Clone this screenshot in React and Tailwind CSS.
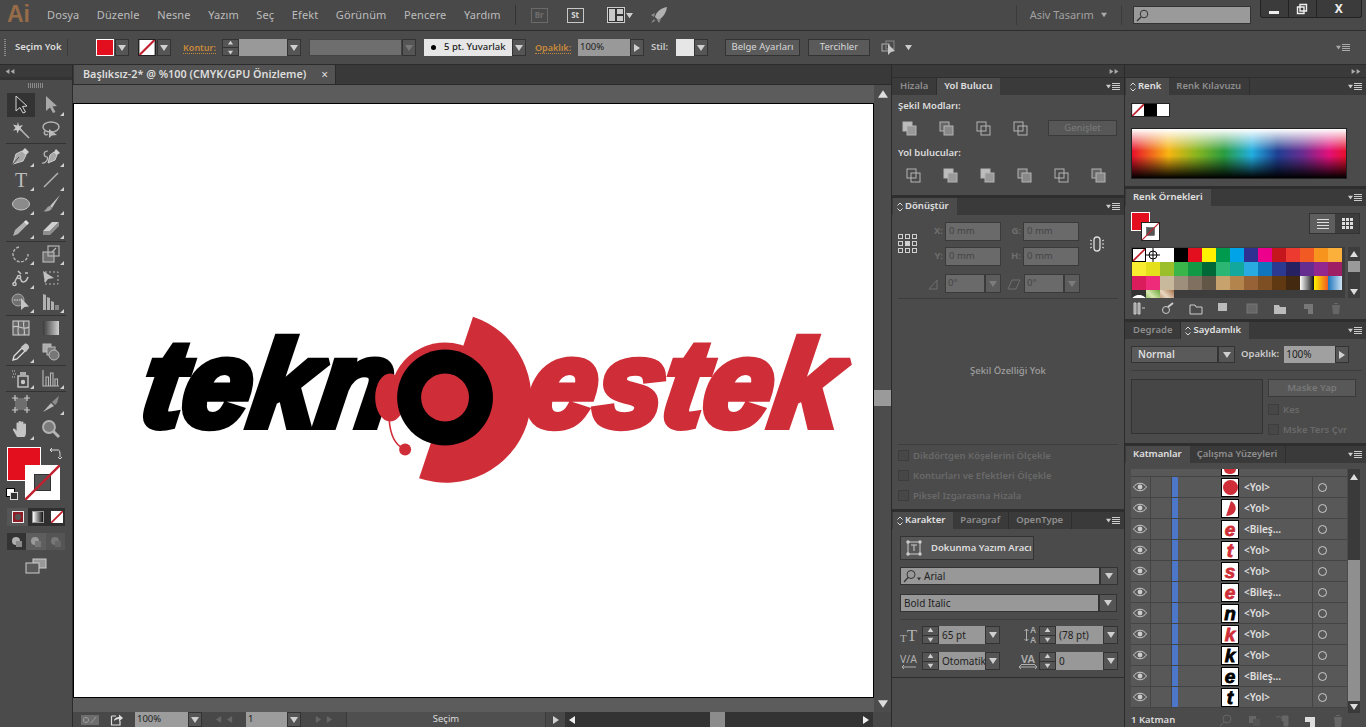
import React from 'react';

const FONT = "font-['Noto_Sans','Liberation_Sans',sans-serif]";

const Arrow = ({ dir = 'down', className = 'fill-[#d0d0d0]', size = 8 }) => {
    const pts = { down: '0,1 8,1 4,7', up: '0,7 8,7 4,1', right: '1,0 7,4 1,8', left: '7,0 1,4 7,8' };
    return (
        <svg width={size} height={size} viewBox="0 0 8 8" className={className}>
            <polygon points={pts[dir]} />
        </svg>
    );
};

const Drop = ({ w = 'w-[14px]', h = 'h-full', muted }) => (
    <div className={`${w} ${h} shrink-0 flex items-center justify-center bg-[#555] border border-[#333]`}>
        <Arrow className={muted ? 'fill-[#777]' : 'fill-[#cfcfcf]'} />
    </div>
);

const Spin = ({ w = 'w-[17px]' }) => (
    <div className={`${w} h-full shrink-0 flex flex-col items-center justify-center gap-[2px] bg-[#555] border border-[#333]`}>
        <Arrow dir="up" size={7} />
        <div className="w-full h-px bg-[#333]" />
        <Arrow size={7} />
    </div>
);

const PanelMenu = () => (
    <div className="flex items-center gap-[1px] ml-auto mr-[4px]">
        <Arrow size={5} className="fill-[#ccc]" />
        <div className="w-[8px] flex flex-col gap-[1px]">
            <div className="h-px bg-[#ccc]" />
            <div className="h-px bg-[#ccc]" />
            <div className="h-px bg-[#ccc]" />
            <div className="h-px bg-[#ccc]" />
        </div>
    </div>
);

const Updown = () => (
    <svg width="6" height="10" viewBox="0 0 6 10" className="mr-[2px] stroke-[#ddd] fill-none">
        <path d="M0.5 3.5 L3 1 L5.5 3.5 M0.5 6.5 L3 9 L5.5 6.5" />
    </svg>
);

const PanelTabs = ({ tabs, active = 0, updown }) => (
    <div className="h-[18px] shrink-0 flex items-stretch bg-[#3a3a3a] pl-[1px] border-t border-[#2e2e2e]">
        {tabs.map((t, i) => (
            <div
                key={t}
                className={`flex items-center pr-[8px] text-[9.5px] font-semibold whitespace-nowrap ${
                    i === active && updown ? 'pl-[4px]' : 'pl-[7px]'
                } ${i === active ? 'bg-[#4b4b4b] text-[#e0e0e0]' : 'text-[#8e8e8e] border-r border-[#2e2e2e]'}`}
            >
                {i === active && updown && <Updown />}
                {t}
            </div>
        ))}
        <PanelMenu />
    </div>
);

const CollapseStrip = ({ left }) => (
    <div className={`h-[12px] shrink-0 bg-[#3a3a3a] flex items-center px-[5px] ${left ? 'justify-start' : 'justify-end'}`}>
        <div className="flex">
            <Arrow dir={left ? 'left' : 'right'} size={5} className="fill-[#aaa]" />
            <Arrow dir={left ? 'left' : 'right'} size={5} className="fill-[#aaa]" />
        </div>
    </div>
);

const Shape = ({ children, w = 20, h = 20, box = '0 0 20 20', className = '' }) => (
    <svg width={w} height={h} viewBox={box} className={className}>
        {children}
    </svg>
);

const G = '#b4b4b4';

const toolIcons = {
    select: <path d="M5 1 V16 L9 12.5 L12 18 L14.5 17 L11.5 11.5 L16 11 Z" fill="#2d2d2d" stroke="#d5d5d5" />,
    direct: <path d="M5 1 V16 L9 12.5 L12 18 L14.5 17 L11.5 11.5 L16 11 Z" fill="#a8a8a8" />,
    wand: (
        <g>
            <path d="M7 2 L8 6 L12 5 L9.5 8 L12 11 L8 10 L6.5 13.5 L5.5 10 L2 10.5 L4.5 8 L2 4.5 L6 5.5 Z" fill="#c8c8c8" />
            <path d="M9 9 L18 18" stroke={G} strokeWidth="1.6" />
        </g>
    ),
    lasso: (
        <g fill="none" stroke={G} strokeWidth="1.4">
            <ellipse cx="10" cy="7" rx="8" ry="5" />
            <path d="M8 9 V18 L11 15.5 L16 15 Z" fill="#bbb" stroke="none" />
            <path d="M4 11 C2 14 5 16 7 14" />
        </g>
    ),
    pen: (
        <g>
            <path d="M2 18 L5 8 L11 5 L15 9 L12 15 Z" fill="#a8a8a8" stroke="#cfcfcf" />
            <path d="M11 5 L14 2 L18 6 L15 9 Z" fill="#cfcfcf" />
            <path d="M2 18 L8 11" stroke="#444" />
        </g>
    ),
    curve: (
        <g>
            <path d="M7 17 L9 9 L13 6 L16 9 L14 14 Z" fill="#a8a8a8" stroke="#cfcfcf" />
            <path d="M13 6 L15 3 L19 7 L16 9 Z" fill="#cfcfcf" />
            <path d="M7 5 C1 5 3 11 6 11 C8 13 4 18 1 17" stroke="#bbb" fill="none" strokeWidth="1.2" />
        </g>
    ),
    line: <path d="M3 17 L17 3" stroke={G} strokeWidth="1.4" />,
    ellipse: <ellipse cx="10" cy="10" rx="8.5" ry="6" fill="#8b8b8b" stroke="#c4c4c4" />,
    brush: (
        <g>
            <path d="M9 12 L19 1 L11 14 Z" fill="#c4c4c4" />
            <path d="M2 17 C5 17 6 12 9 12 L11 14 C10 17 6 18 2 17 Z" fill="#a0a0a0" />
        </g>
    ),
    pencil: (
        <g>
            <path d="M2 18 L4 12 L14 3 L17 6 L7 16 Z" fill="#b0b0b0" />
            <path d="M13 4 L15 2 L18 5 L16 7 Z" fill="#e0e0e0" />
        </g>
    ),
    eraser: (
        <g>
            <path d="M2 13 L11 4 L18 4 L9 13 Z" fill="#d0d0d0" />
            <path d="M2 13 L9 13 L9 17 L2 17 Z M9 13 L18 4 V8 L9 17 Z" fill="#8e8e8e" />
        </g>
    ),
    rotate: <path d="M8 3 A7.5 7.5 0 1 0 17 10" fill="none" stroke={G} strokeWidth="1.4" strokeDasharray="3 1.5" />,
    scale: (
        <g fill="none" stroke={G} strokeWidth="1.2">
            <rect x="2" y="8" width="11" height="10" fill="#707070" />
            <rect x="7" y="2" width="11" height="10" />
            <path d="M11 8 L15 4" />
        </g>
    ),
    warp: (
        <g fill="none" stroke="#c4c4c4" strokeWidth="1.5">
            <path d="M3 16 C6 8 8 6 10 12 C11 15 15 15 17 9" />
            <circle cx="3.5" cy="16" r="1.6" fill="#444" />
            <circle cx="8" cy="9" r="1.6" fill="#444" />
            <path d="M7 3 L10 6 M14 5 L17 5" />
        </g>
    ),
    free: (
        <g>
            <rect x="4" y="4" width="13" height="12" fill="none" stroke={G} strokeDasharray="2 2" />
            <path d="M2 3 L13 10 L7 11 L4 15 Z" fill="#c0c0c0" />
        </g>
    ),
    builder: (
        <g>
            <circle cx="7" cy="8" r="6" fill="#707070" stroke="#aaa" />
            <path d="M3 8 H11" stroke="#ddd" strokeDasharray="1.5 1" />
            <path d="M10 6 V18 L13.5 15 L18 14.5 Z" fill="#c4c4c4" />
        </g>
    ),
    perspective: (
        <g fill="#b0b0b0">
            <path d="M2 2 L5 3 V18 H2 Z M6 5 L9 6 V18 H6 Z M10 9 L13 10 V18 H10 Z" />
            <path d="M14 13 H18 V18 H14 Z" fill="#888" />
        </g>
    ),
    mesh: (
        <g fill="none" stroke="#c8c8c8" strokeWidth="1.1">
            <rect x="2" y="3" width="16" height="14" fill="#666" />
            <path d="M2 9 C7 6 12 13 18 9 M7 3 C9 8 5 13 8 17 M13 3 C11 8 15 13 13 17" />
        </g>
    ),
    gradient: (
        <g>
            <defs>
                <linearGradient id="tg" x1="0" x2="1">
                    <stop offset="0" stopColor="#3c3c3c" />
                    <stop offset="1" stopColor="#d0d0d0" />
                </linearGradient>
            </defs>
            <rect x="2" y="3" width="16" height="14" fill="url(#tg)" />
        </g>
    ),
    dropper: (
        <g>
            <path d="M2 18 L3 14 L11 6 L14 9 L6 17 Z" fill="none" stroke="#ddd" strokeWidth="1.3" />
            <path d="M10 5 L14 1.5 C16 1 18.5 3.5 18 6 L15 10 Z" fill="#c4c4c4" />
        </g>
    ),
    blend: (
        <g stroke="#bbb" fill="#777">
            <rect x="2" y="2" width="8" height="8" fill="#aaa" />
            <rect x="6" y="5" width="8" height="8" />
            <circle cx="13" cy="13" r="5" />
        </g>
    ),
    sprayer: (
        <g>
            <rect x="7" y="8" width="10" height="11" fill="none" stroke="#c8c8c8" strokeWidth="1.4" />
            <rect x="9" y="4" width="6" height="4" fill="#aaa" />
            <circle cx="12" cy="14" r="2.2" fill="#c8c8c8" />
            <path d="M1 3 H5 M2 6 H6 M1 9 H4" stroke="#ccc" strokeDasharray="1 1" />
        </g>
    ),
    column: (
        <g fill="none" stroke="#b8b8b8" strokeWidth="1.1">
            <path d="M2 2 V18 H18" />
            <path d="M5 18 V9 H7.5 V18 M9.5 18 V5 H12 V18 M14 18 V11 H16.5 V18" />
        </g>
    ),
    artboard: (
        <g stroke="#c8c8c8" strokeWidth="1.2">
            <rect x="4" y="4" width="12" height="12" fill="#6e6e6e" stroke="none" />
            <path d="M4 1 V7 M16 1 V7 M4 13 V19 M16 13 V19 M1 4 H7 M13 4 H19 M1 16 H7 M13 16 H19" fill="none" />
        </g>
    ),
    slice: (
        <g>
            <path d="M2 18 L10 9 L13 12 Z" fill="#bbb" />
            <path d="M11 8 L18 2 L16 9 L14 11 Z" fill="#8c8c8c" />
        </g>
    ),
    hand: (
        <path
            d="M6 18 L2 11 C1.5 9.5 3.5 9 4.5 10.5 L5.5 12 V4.5 C5.5 3 7.5 3 7.5 4.5 V9 V3 C7.5 1.5 10 1.5 10 3 V9 V3.5 C10 2 12.5 2 12.5 3.5 V9.5 V5.5 C12.5 4 15 4 15 5.5 V13 C15 16 14 18 13 18 Z"
            fill="#c4c4c4"
        />
    ),
    zoom: (
        <g fill="none" stroke="#b4b4b4">
            <circle cx="8" cy="8" r="6" strokeWidth="1.8" fill="#7c7c7c" />
            <path d="M12.5 12.5 L18 18" strokeWidth="3" />
        </g>
    ),
};

const Tool = ({ name, mark, active, children }) => (
    <div className={`relative w-[28px] h-[24px] flex items-center justify-center ${active ? 'bg-[#333]' : ''}`}>
        {children || <Shape>{toolIcons[name]}</Shape>}
        {mark && <div className="absolute right-[1px] bottom-[1px] w-0 h-0 border-l-[4px] border-l-transparent border-b-[4px] border-b-[#cfcfcf]" />}
    </div>
);

const ToolRow = ({ children, tall }) => (
    <div className={`flex justify-center gap-[2px] shrink-0 ${tall ? 'h-[25px]' : 'h-[24px]'}`}>{children}</div>
);
const ToolSep = () => <div className="h-px shrink-0 bg-[#333] mx-[6px] my-[0.5px]" />;

const Toolbar = () => (
    <div className="w-[73px] shrink-0 flex flex-col bg-[#4b4b4b] border-r border-[#2b2b2b]">
        <CollapseStrip left />
        <div className="h-[3px] bg-[#333]" />
        <div className="mx-auto mt-[3px] mb-[5px] w-[16px] h-[5px] bg-[repeating-linear-gradient(to_right,#8a8a8a_0,#8a8a8a_1px,transparent_1px,transparent_2px)]" />
        <ToolRow tall>
            <Tool name="select" active />
            <Tool name="direct" mark />
        </ToolRow>
        <ToolRow>
            <Tool name="wand" />
            <Tool name="lasso" />
        </ToolRow>
        <ToolSep />
        <ToolRow>
            <Tool name="pen" mark />
            <Tool name="curve" mark />
        </ToolRow>
        <ToolRow>
            <Tool mark>
                <span className="font-['Liberation_Serif',serif] text-[20px] leading-none text-[#bdbdbd]">T</span>
            </Tool>
            <Tool name="line" mark />
        </ToolRow>
        <ToolRow>
            <Tool name="ellipse" mark />
            <Tool name="brush" mark />
        </ToolRow>
        <ToolRow>
            <Tool name="pencil" mark />
            <Tool name="eraser" mark />
        </ToolRow>
        <ToolSep />
        <ToolRow>
            <Tool name="rotate" mark />
            <Tool name="scale" mark />
        </ToolRow>
        <ToolRow>
            <Tool name="warp" mark />
            <Tool name="free" />
        </ToolRow>
        <ToolRow>
            <Tool name="builder" mark />
            <Tool name="perspective" mark />
        </ToolRow>
        <ToolSep />
        <ToolRow>
            <Tool name="mesh" />
            <Tool name="gradient" />
        </ToolRow>
        <ToolRow>
            <Tool name="dropper" mark />
            <Tool name="blend" />
        </ToolRow>
        <ToolSep />
        <ToolRow>
            <Tool name="sprayer" mark />
            <Tool name="column" mark />
        </ToolRow>
        <ToolSep />
        <ToolRow tall>
            <Tool name="artboard" />
            <Tool name="slice" mark />
        </ToolRow>
        <ToolRow>
            <Tool name="hand" mark />
            <Tool name="zoom" />
        </ToolRow>
        <div className="relative h-[53px] mt-[6px] shrink-0">
            <div className="absolute left-[7px] top-0 w-[34px] h-[34px] bg-[#e30f1f] border border-white" />
            <div className="absolute left-[25px] top-[18px] w-[35px] h-[35px]">
                <NoStroke big />
            </div>
            <svg className="absolute left-[49px] top-[0px]" width="13" height="13" viewBox="0 0 13 13" fill="none" stroke="#ddd">
                <path d="M1 3 H9 C11 3 11 6 11 10 M1 3 L3 1 M1 3 L3 5 M9 10 L11 12 L13 10" />
            </svg>
            <div className="absolute left-[6px] top-[41px] w-[9px] h-[9px] bg-white border border-black" />
            <div className="absolute left-[10px] top-[45px] w-[8px] h-[8px] bg-[#333] border border-[#ddd]" />
        </div>
        <div className="mx-[7px] mt-[8px] h-[18px] shrink-0 flex items-center bg-[#2f2f2f]">
            <div className="w-[21px] h-full flex items-center justify-center bg-[#555]">
                <div className="w-[12px] h-[12px] bg-[#8e1d27] border border-[#eee] flex items-center justify-center">
                    <div className="w-[6px] h-[6px] rounded-full bg-[#555]" />
                </div>
            </div>
            <div className="w-[20px] flex justify-center">
                <div className="w-[12px] h-[12px] border border-[#999] bg-[linear-gradient(to_right,#fff,#111)]" />
            </div>
            <div className="w-[17px] flex justify-center">
                <div className="w-[12px] h-[12px]">
                    <NoStroke />
                </div>
            </div>
        </div>
        <div className="mx-[7px] mt-[7px] h-[17px] shrink-0 flex items-center bg-[#333]">
            <div className="w-[19px] flex justify-center">
                <ScreenIcon a="#b0b0b0" b="#8a8a8a" />
            </div>
            <div className="w-[20px] h-full flex items-center justify-center bg-[#5e5e5e]">
                <ScreenIcon a="#999" b="#777" />
            </div>
            <div className="w-[19px] flex justify-center bg-[#555] h-full items-center">
                <ScreenIcon a="#777" b="#666" />
            </div>
        </div>
        <div className="flex justify-center mt-[8px]">
            <Shape w={22} h={16} box="0 0 22 16">
                <rect x="8" y="1" width="13" height="9" fill="#999" stroke="#ccc" />
                <rect x="1" y="5" width="13" height="10" fill="#5a5a5a" stroke="#ccc" />
            </Shape>
        </div>
    </div>
);

const ScreenIcon = ({ a, b }) => (
    <Shape w={12} h={12} box="0 0 12 12">
        <circle cx="5" cy="5" r="4" fill={a} />
        <rect x="5" y="5" width="6" height="6" fill={b} />
    </Shape>
);

const NoStroke = ({ big }) => (
    <svg viewBox="0 0 35 35" className="block w-full h-full">
        <rect x="0" y="0" width="35" height="35" fill="#fff" />
        {big && <rect x="9.5" y="9.5" width="16" height="16" fill="#555" stroke="#333" />}
        <path d="M0 35 L35 0" stroke="#c0202e" strokeWidth={big ? 2.4 : 5} />
    </svg>
);

const MenuBar = () => (
    <div className="h-[31px] shrink-0 flex items-center bg-[#494949] border-b border-[#2c2c2c] text-[#bcbcbc]">
        <span className="w-[47px] pl-[7px] pb-[2px] text-[23px] font-semibold leading-none text-[#966c49] font-['Liberation_Sans',sans-serif]">Ai</span>
        <div className="flex gap-[17.6px] text-[11px] tracking-[0.1px]">
            {['Dosya', 'Düzenle', 'Nesne', 'Yazım', 'Seç', 'Efekt', 'Görünüm', 'Pencere', 'Yardım'].map((m) => (
                <span key={m}>{m}</span>
            ))}
        </div>
        <div className="w-px h-[20px] bg-[#333] ml-[14px]" />
        <span className="ml-[15px] w-[17px] h-[15px] flex items-center justify-center border border-[#6a6a6a] text-[8px] text-[#6f6f6f] font-bold">Br</span>
        <span className="ml-[19px] w-[17px] h-[15px] flex items-center justify-center border border-[#c8c8c8] text-[8px] text-[#d8d8d8] font-bold">St</span>
        <Shape w={18} h={16} box="0 0 18 16" className="ml-[23px]">
            <rect x="0.5" y="0.5" width="17" height="15" fill="#333" stroke="#ccc" />
            <rect x="2" y="2" width="6" height="12" fill="#c8c8c8" />
            <rect x="10" y="2" width="6" height="5" fill="#c8c8c8" />
            <rect x="10" y="9" width="6" height="5" fill="#c8c8c8" />
        </Shape>
        <Arrow className="fill-[#ccc] ml-[1px]" size={7} />
        <Shape w={18} h={18} box="0 0 18 18" className="ml-[17px]">
            <path d="M17 1 C11 2 6 6 5 11 L8 14 C13 12 16 7 17 1 Z" fill="#b0b0b0" />
            <path d="M5 7 L1 9 L4 11 Z M11 13 L9 17 L7 14 Z M4 13 L1 17 L5 15 Z" fill="#8e8e8e" />
        </Shape>
        <div className="w-px h-[20px] bg-[#3c3c3c] ml-[348px]" />
        <span className="ml-[13px] text-[11px] text-[#a0a0a0]">Asiv Tasarım</span>
        <Arrow size={6} className="fill-[#aaa] ml-[7px]" />
        <div className="w-px h-[20px] bg-[#3c3c3c] ml-[14px]" />
        <div className="ml-[11px] w-[118px] h-[18px] flex items-center bg-[#9a9a9a] border border-[#333] pl-[2px]">
            <Shape w={13} h={13} box="0 0 13 13">
                <circle cx="8" cy="5" r="3.8" fill="none" stroke="#333" />
                <path d="M5 8 L1 12" stroke="#333" strokeWidth="1.3" />
            </Shape>
        </div>
        <div className="ml-[9px] self-start h-[18px] w-[102px] flex bg-[#3b3b3b] border border-t-0 border-[#222] rounded-b-[3px]">
            <div className="w-[28px] flex items-end justify-center pb-[3px] border-r border-[#222]">
                <div className="w-[10px] h-[3px] bg-[#eee]" />
            </div>
            <div className="w-[28px] flex items-center justify-center border-r border-[#222]">
                <Shape w={12} h={12} box="0 0 12 12">
                    <path d="M4 1.5 H10.5 V8 H4 Z M1.5 4 H8 V10.5 H1.5 Z" fill="none" stroke="#eee" strokeWidth="1.4" />
                </Shape>
            </div>
            <div className="flex-1 flex items-center justify-center">
                <span className="font-bold text-[12px] leading-none text-[#eee]">X</span>
            </div>
        </div>
    </div>
);

const CtlLabel = ({ children, ml, w }) => (
    <span className={`${ml} ${w} text-[9px] font-semibold text-[#c98a3c] border-b border-dotted border-[#c98a3c] leading-[11px] whitespace-nowrap`}>
        {children}
    </span>
);

const CtlBtn = ({ children, w, ml }) => (
    <div className={`${w} ${ml} h-[17px] flex items-center justify-center bg-[#5a5a5a] border border-[#333] text-[9.5px] text-[#d8d8d8] whitespace-nowrap`}>
        {children}
    </div>
);

const ControlBar = () => (
    <div className="h-[34px] shrink-0 flex items-center bg-[#4b4b4b] border-b border-[#2c2c2c] text-[#ddd]">
        <div className="ml-[4px] w-[2px] h-[17px] bg-[repeating-linear-gradient(to_bottom,#8a8a8a_0,#8a8a8a_1px,transparent_1px,transparent_2px)]" />
        <span className="ml-[9px] w-[52px] text-[9.5px] font-semibold whitespace-nowrap">Seçim Yok</span>
        <div className="w-px h-[17px] bg-[#3a3a3a]" />
        <div className="ml-[28px] w-[18px] h-[17px] bg-[#e30f1f] border border-white" />
        <div className="ml-px h-[17px] flex"><Drop /></div>
        <div className="ml-[9px] w-[18px] h-[17px] border border-[#222]"><NoStroke /></div>
        <div className="ml-px h-[17px] flex"><Drop /></div>
        <CtlLabel ml="ml-[12px]" w="w-[33px]">Kontur:</CtlLabel>
        <div className="ml-[6px] h-[17px] flex">
            <Spin />
            <div className="w-[48px] bg-[#999]" />
            <Drop />
        </div>
        <div className="ml-[8px] h-[17px] flex">
            <div className="w-[93px] bg-[#6e6e6e] border border-[#444]" />
            <Drop muted />
        </div>
        <div className="ml-[8px] h-[17px] flex">
            <div className="w-[88px] bg-[#e6e6e6] flex items-center text-[9.5px] text-[#222] font-medium whitespace-nowrap">
                <span className="w-[5px] h-[5px] rounded-full bg-black ml-[7px] mr-[8px]" />
                5 pt. Yuvarlak
            </div>
            <Drop />
        </div>
        <CtlLabel ml="ml-[9px]" w="w-[36px]">Opaklık:</CtlLabel>
        <div className="ml-[7px] h-[17px] flex">
            <div className="w-[52px] bg-[#999] flex items-center pl-[2px] text-[9.5px] text-[#222]">100%</div>
            <div className="w-[14px] flex items-center justify-center bg-[#555] border border-[#333]">
                <Arrow dir="right" />
            </div>
        </div>
        <span className="ml-[7px] w-[25px] text-[9.5px] font-semibold text-[#ccc]">Stil:</span>
        <div className="w-[18px] h-[17px] bg-[#e6e6e6]" />
        <div className="h-[17px] flex"><Drop /></div>
        <CtlBtn w="w-[75px]" ml="ml-[17px]">Belge Ayarları</CtlBtn>
        <CtlBtn w="w-[62px]" ml="ml-[8px]">Tercihler</CtlBtn>
        <Shape w={16} h={16} box="0 0 16 16" className="ml-[11px]">
            <rect x="1" y="4" width="7" height="7" fill="none" stroke="#b0b0b0" />
            <rect x="5" y="1" width="8" height="8" fill="none" stroke="#888" />
            <path d="M7 4 V15 L10 12 L14 11 Z" fill="#c8c8c8" />
        </Shape>
        <Arrow className="fill-[#ccc] ml-[8px]" size={7} />
        <div className="ml-auto mr-[16px] flex items-center gap-[1px]">
            <Arrow size={5} className="fill-[#aaa]" />
            <div className="w-[8px] flex flex-col gap-[1px]">
                <div className="h-px bg-[#aaa]" />
                <div className="h-px bg-[#aaa]" />
                <div className="h-px bg-[#aaa]" />
                <div className="h-px bg-[#aaa]" />
            </div>
        </div>
    </div>
);

const Logo = () => (
    <svg viewBox="74 104 799 594" className="block w-full h-full">
        <g fontFamily="'Liberation Sans', sans-serif" fontWeight="bold" fontStyle="italic" fontSize="122" strokeWidth="8" strokeLinejoin="miter" strokeMiterlimit="2" transform="translate(0 427) skewX(-8) translate(0 -427)">
            <text x="138" y="427" textLength="250" lengthAdjust="spacingAndGlyphs" fill="#000" stroke="#000">tekn</text>
            <text x="524" y="427" textLength="312" lengthAdjust="spacingAndGlyphs" fill="#cf2e38" stroke="#cf2e38">estek</text>
        </g>
        <path d="M473 317 A85 85 0 0 1 419 479 Z" fill="#cf2e38" />
        <path d="M390 398 A55 55 0 0 1 466 347 L445 398 Z" fill="#cf2e38" />
        <ellipse cx="390" cy="398" rx="15" ry="24" fill="#cf2e38" />
        <path d="M389 420 C390 434 395 445 403 449" fill="none" stroke="#cf2e38" strokeWidth="1.6" />
        <circle cx="405" cy="450" r="6" fill="#cf2e38" />
        <circle cx="445" cy="398" r="48" fill="#000" />
        <circle cx="445" cy="398" r="24" fill="#cf2e38" />
    </svg>
);

const StatusBar = () => (
    <div className="h-[15px] shrink-0 flex items-stretch bg-[#484848] text-[9.5px] text-[#ccc]">
        <div className="w-[62px] flex items-center pl-[8px] gap-[11px]">
            <Shape w={18} h={12} box="0 0 18 12">
                <rect x="0" y="1" width="18" height="10" fill="#6d6d6d" />
                <circle cx="5" cy="6" r="2.6" fill="none" stroke="#999" />
                <path d="M10 9 L15 3" stroke="#999" />
            </Shape>
            <Shape w={13} h={13} box="0 0 13 13">
                <path d="M1.5 3 H6 M1.5 3 V12 H10 V8" fill="none" stroke="#ddd" strokeWidth="1.2" />
                <path d="M4 8 C4 5 7 4 9 4 V1.5 L13 5 L9 8.5 V6 C7 6 5 7 4 8 Z" fill="#ddd" />
            </Shape>
        </div>
        <div className="w-[53px] bg-[#9c9c9c] text-[#222] flex items-center pl-[2px]">100%</div>
        <Drop />
        <div className="w-[44px] flex items-center justify-center gap-[4px]">
            <Arrow dir="left" size={7} className="fill-[#666]" />
            <Arrow dir="left" size={7} className="fill-[#666]" />
        </div>
        <div className="w-[41px] bg-[#9c9c9c] text-[#222] flex items-center pl-[2px]">1</div>
        <Drop />
        <div className="w-[45px] flex items-center justify-center gap-[4px]">
            <Arrow dir="right" size={7} className="fill-[#666]" />
            <Arrow dir="right" size={7} className="fill-[#666]" />
        </div>
        <div className="w-[200px] flex items-center justify-center bg-[#4f4f4f] border-x border-[#3a3a3a] text-[#ddd]">Seçim</div>
        <div className="w-[19px] flex items-center justify-center"><Arrow dir="right" /></div>
        <div className="w-[308px] flex items-center bg-[#333]">
            <div className="w-[14px] flex justify-center"><Arrow dir="left" className="fill-[#eee]" /></div>
            <div className="w-[131px]" />
            <div className="w-[15px] h-full bg-[#8c8c8c]" />
            <div className="flex-1" />
            <div className="w-[14px] flex justify-center"><Arrow dir="right" className="fill-[#eee]" /></div>
        </div>
    </div>
);

const CanvasArea = () => (
    <div className="w-[818px] shrink-0 flex flex-col bg-[#4b4b4b]">
        <div className="h-[20px] shrink-0 flex bg-[#393939] border-b border-[#2a2a2a]">
            <div className="ml-[1px] w-[262px] flex items-center justify-between pl-[9px] pr-[7px] bg-[#535353] border-r border-[#2a2a2a] text-[10.8px] font-semibold text-[#ddd] whitespace-nowrap">
                <span>Başlıksız-2* @ %100 (CMYK/GPU Önizleme)</span>
                <span className="text-[12px] leading-none font-normal">×</span>
            </div>
        </div>
        <div className="flex-1 flex min-h-0">
            <div className="w-[801px] shrink-0 flex flex-col bg-[#5c5c5c]">
                <div className="h-[19px] shrink-0 border-b border-black" />
                <div className="flex-1 min-h-0 bg-white border-x border-black">
                    <Logo />
                </div>
                <div className="h-[15px] shrink-0 border-t border-black" />
            </div>
            <div className="flex-1 flex flex-col items-center bg-[#4c4c4c]">
                <div className="h-[17px] flex items-center"><Arrow dir="up" className="fill-[#ddd]" size={10} /></div>
                <div className="h-[288px]" />
                <div className="w-full h-[16px] bg-[#9a9a9a]" />
                <div className="flex-1" />
                <div className="h-[17px] flex items-center"><Arrow className="fill-[#ddd]" size={10} /></div>
            </div>
        </div>
        <StatusBar />
    </div>
);

const PathOp = ({ kind }) => (
    <Shape w={15} h={15} box="0 0 15 15">
        <rect x="1" y="1" width="9" height="9" fill={kind === 'solid' ? '#bdbdbd' : kind === 'dim' ? '#666' : 'none'} stroke="#b4b4b4" />
        <rect x="5" y="5" width="9" height="9" fill={kind === 'solid' ? '#999' : kind === 'dim' ? '#888' : 'none'} stroke="#b4b4b4" />
    </Shape>
);

const Num = ({ label, value }) => (
    <div className="flex items-center">
        <span className="w-[15px] text-right mr-[2px] text-[9.5px] font-bold text-[#6e6e6e]">{label}</span>
        <div className="w-[56px] h-[19px] bg-[#6a6a6a] border border-[#3a3a3a] flex items-center pl-[3px] text-[9.5px] text-[#454545]">{value}</div>
    </div>
);

const AngleBox = ({ icon }) => (
    <div className="flex items-center">
        <div className="w-[17px] flex justify-start">{icon}</div>
        <div className="w-[40px] h-[19px] bg-[#6a6a6a] border border-[#3a3a3a] flex items-center pl-[2px] text-[9.5px] text-[#454545]">0°</div>
        <div className="w-[16px] h-[19px] flex items-center justify-center bg-[#5c5c5c] border border-[#3a3a3a]">
            <Arrow className="fill-[#7c7c7c]" />
        </div>
    </div>
);

const Check = ({ children, cls = '' }) => (
    <div className={`flex items-center gap-[4px] text-[9.5px] leading-[11px] text-[#696969] font-semibold ${cls}`}>
        <div className="w-[11px] h-[11px] bg-[#474747] border border-[#3d3d3d]" />
        {children}
    </div>
);

const Field = ({ w, value, dark }) => (
    <div className={`${w} h-full bg-[#989898] flex items-center pl-[3px] text-[10px] ${dark ? 'text-[#222]' : 'text-[#333]'}`}>{value}</div>
);

const CharRow = ({ left, right }) => (
    <div className="flex items-center h-[18px] mt-[8px] first:mt-0">{left}{right}</div>
);

const Col1 = () => (
    <div className="w-[233px] shrink-0 flex flex-col bg-[#4b4b4b] border-l border-[#2a2a2a] text-[#ddd]">
        <CollapseStrip />
        <PanelTabs tabs={['Hizala', 'Yol Bulucu']} active={1} />
        <div className="h-[102px] shrink-0 px-[6px] pt-[5px] border-b-2 border-[#2e2e2e]">
            <div className="text-[9.5px] font-semibold text-[#ddd] leading-[12px]">Şekil Modları:</div>
            <div className="flex items-center mt-[8px]">
                <div className="flex gap-[22px] pl-[4px]">
                    <PathOp kind="solid" />
                    <PathOp kind="dim" />
                    <PathOp />
                    <PathOp />
                </div>
                <div className="ml-[20px] w-[69px] h-[16px] flex items-center justify-center bg-[#575757] border border-[#3a3a3a] text-[9.5px] text-[#7c7c7c]">Genişlet</div>
            </div>
            <div className="text-[9.5px] font-semibold text-[#ddd] leading-[12px] mt-[11px]">Yol bulucular:</div>
            <div className="flex gap-[22px] pl-[8px] mt-[9px]">
                <PathOp />
                <PathOp kind="solid" />
                <PathOp kind="solid" />
                <PathOp kind="dim" />
                <PathOp />
                <PathOp kind="dim" />
            </div>
        </div>
        <PanelTabs tabs={['Dönüştür']} updown />
        <div className="h-[296px] shrink-0 flex flex-col border-b-2 border-[#2e2e2e] px-[6px]">
            <div className="h-[84px] shrink-0 flex items-start pt-[7px] border-b border-[#3d3d3d]">
                <div className="pt-[12px]">
                    <Shape w={20} h={20} box="0 0 20 20">
                        <g fill="none" stroke="#d0d0d0">
                            <rect x="0.5" y="0.5" width="4" height="4" />
                            <rect x="7.5" y="0.5" width="4" height="4" />
                            <rect x="14.5" y="0.5" width="4" height="4" />
                            <rect x="0.5" y="7.5" width="4" height="4" />
                            <rect x="14.5" y="7.5" width="4" height="4" />
                            <rect x="0.5" y="14.5" width="4" height="4" />
                            <rect x="7.5" y="14.5" width="4" height="4" />
                            <rect x="14.5" y="14.5" width="4" height="4" />
                        </g>
                        <rect x="7" y="7" width="5" height="5" fill="#d0d0d0" />
                    </Shape>
                </div>
                <div className="ml-[10px] flex flex-col gap-[6px]">
                    <div className="flex gap-[5px]">
                        <Num label="X:" value="0 mm" />
                        <Num label="G:" value="0 mm" />
                    </div>
                    <div className="flex gap-[5px]">
                        <Num label="Y:" value="0 mm" />
                        <Num label="H:" value="0 mm" />
                    </div>
                    <div className="flex gap-[6px] mt-[2px]">
                        <AngleBox icon={<Shape w={14} h={12} box="0 0 14 12"><path d="M1 11 L9 2 V11 Z" fill="none" stroke="#6e6e6e" /></Shape>} />
                        <AngleBox icon={<Shape w={14} h={12} box="0 0 14 12"><path d="M1 11 L5 2 H13 L9 11 Z" fill="none" stroke="#6e6e6e" /></Shape>} />
                    </div>
                </div>
                <div className="ml-[9px] pt-[12px]">
                    <Shape w={16} h={20} box="0 0 16 20">
                        <rect x="5" y="3" width="6" height="14" rx="3" fill="none" stroke="#ddd" strokeWidth="1.3" />
                        <path d="M1 6 L3 7 M1 10 H3 M1 14 L3 13 M15 6 L13 7 M15 10 H13 M15 14 L13 13" stroke="#ddd" />
                    </Shape>
                </div>
            </div>
            <div className="flex-1 flex items-center justify-center text-[9.5px] text-[#a0a0a0] font-medium">Şekil Özelliği Yok</div>
            <div className="h-[65px] shrink-0 border-t border-[#3d3d3d] pt-[5px] flex flex-col gap-[9px]">
                <Check>Dikdörtgen Köşelerini Ölçekle</Check>
                <Check>Konturları ve Efektleri Ölçekle</Check>
                <Check>Piksel Izgarasına Hizala</Check>
            </div>
        </div>
        <PanelTabs tabs={['Karakter', 'Paragraf', 'OpenType']} updown />
        <div className="flex-1 flex flex-col px-[8px] pt-[7px]">
            <div className="w-[134px] h-[24px] flex items-center bg-[#575757] border border-[#333] pl-[5px] text-[9.5px] font-semibold text-[#ddd] whitespace-nowrap">
                <Shape w={16} h={16} box="0 0 16 16" className="mr-[9px]">
                    <rect x="2" y="2" width="12" height="12" fill="none" stroke="#ccc" />
                    <path d="M5 5 H11 M8 5 V11" stroke="#ccc" />
                    <circle cx="2" cy="2" r="1.7" fill="#ccc" />
                    <circle cx="14" cy="2" r="1.7" fill="#ccc" />
                    <circle cx="2" cy="14" r="1.7" fill="#ccc" />
                    <circle cx="14" cy="14" r="1.7" fill="#ccc" />
                </Shape>
                Dokunma Yazım Aracı
            </div>
            <div className="w-[218px] h-[18px] flex mt-[7px]">
                <div className="flex-1 bg-[#989898] flex items-center pl-[2px] text-[10px] text-[#222] border border-[#333]">
                    <Shape w={14} h={14} box="0 0 14 14">
                        <circle cx="8" cy="5.5" r="4" fill="none" stroke="#333" />
                        <path d="M5 8.5 L1 13" stroke="#333" strokeWidth="1.2" />
                    </Shape>
                    <Arrow size={4} className="fill-[#333] mt-[6px] mr-[3px]" />
                    Arial
                </div>
                <Drop w="w-[18px]" />
            </div>
            <div className="w-[217px] h-[18px] flex mt-[9px]">
                <div className="flex-1 bg-[#989898] flex items-center pl-[3px] text-[10px] text-[#222] border border-[#333]">Bold Italic</div>
                <Drop w="w-[18px]" />
            </div>
            <div className="h-px w-[218px] bg-[#3d3d3d] mt-[7px]" />
            <div className="mt-[6px] flex flex-col w-[218px]">
                <CharRow
                    left={
                        <div className="flex items-center w-[117px] h-full">
                            <span className="w-[21px] flex items-end font-['Liberation_Serif',serif] leading-none text-[#b0b0b0]">
                                <span className="text-[11px]">T</span>
                                <span className="text-[17px]">T</span>
                            </span>
                            <div className="h-full flex ml-[1px]">
                                <Spin />
                                <Field w="w-[46px]" value="65 pt" dark />
                                <Drop w="w-[15px]" />
                            </div>
                        </div>
                    }
                    right={
                        <div className="flex items-center h-full ml-[1px]">
                            <div className="w-[20px] flex items-center justify-end pr-[2px]">
                                <Shape w={5} h={14} box="0 0 5 14">
                                    <path d="M2.5 1 V13 M0.5 3 L2.5 1 L4.5 3 M0.5 11 L2.5 13 L4.5 11" fill="none" stroke="#b0b0b0" />
                                </Shape>
                                <span className="text-[8.5px] leading-[10px] font-semibold text-[#b0b0b0] text-center ml-[1px]">A<br />A</span>
                            </div>
                            <div className="h-full flex ml-[1px]">
                                <Spin />
                                <Field w="w-[47px]" value="(78 pt)" dark />
                                <Drop w="w-[15px]" />
                            </div>
                        </div>
                    }
                />
                <CharRow
                    left={
                        <div className="flex items-center w-[117px] h-full">
                            <div className="w-[21px] flex flex-col items-start">
                                <span className="text-[10.5px] leading-[11px] text-[#b0b0b0]">V/A</span>
                                <Shape w={16} h={4} box="0 0 16 4" className="ml-[2px]">
                                    <path d="M0 2 H14 M0 2 L2 0 M0 2 L2 4" fill="none" stroke="#b0b0b0" />
                                </Shape>
                            </div>
                            <div className="h-full flex ml-[1px]">
                                <Spin />
                                <Field w="w-[46px]" value="Otomatik" dark />
                                <Drop w="w-[15px]" />
                            </div>
                        </div>
                    }
                    right={
                        <div className="flex items-center h-full ml-[1px]">
                            <div className="w-[20px] flex flex-col items-center">
                                <span className="text-[11px] leading-[11px] font-semibold text-[#b0b0b0] border-b border-[#b0b0b0]">VA</span>
                                <Shape w={18} h={4} box="0 0 18 4">
                                    <path d="M0 2 H18 M0 2 L2 0 M0 2 L2 4 M18 2 L16 0 M18 2 L16 4" fill="none" stroke="#b0b0b0" />
                                </Shape>
                            </div>
                            <div className="h-full flex ml-[1px]">
                                <Spin />
                                <Field w="w-[47px]" value="0" dark />
                                <Drop w="w-[15px]" />
                            </div>
                        </div>
                    }
                />
            </div>
            <div className="h-px bg-[#2e2e2e] -mx-[8px] mt-[7px]" />
        </div>
    </div>
);

const swatches = [
    ['none', 'reg', '#ffffff', '#000000', '#e30f1f', '#fff200', '#009a4e', '#00a3e8', '#2e3192', '#ec008c', '#c4161c', '#ed3a30', '#f15a22', '#f7941d', '#fbb03b'],
    ['#f9ed32', '#e4e01b', '#9bbf2a', '#39b54a', '#119946', '#006837', '#2bb673', '#13a89e', '#29abe2', '#0f75bc', '#2b3990', '#262262', '#662d91', '#92278f', '#9e1f63'],
    ['#da1c5c', '#ee2a7b', '#c9b99c', '#9e8f7d', '#7f7060', '#625646', '#c8a26c', '#b3854c', '#966236', '#7f4f24', '#603913', '#42290f', 'grad1', 'grad2', 'grad3'],
    ['pat1', 'pat2', 'pat3'],
];

const swatchClass = {
    grad1: 'bg-[linear-gradient(to_right,#fff,#111)]',
    grad2: 'bg-[linear-gradient(to_right,#fff200,#f15a22)]',
    grad3: 'bg-[linear-gradient(to_right,#1c75bc,#cfe3f4)]',
    pat1: 'bg-[radial-gradient(circle_at_50%_100%,#fff_55%,#333_60%)]',
    pat2: 'bg-[linear-gradient(45deg,#6aa93a,#d8e8b0,#6aa93a)]',
    pat3: 'bg-[linear-gradient(45deg,#a5704a,#e8d6c0,#a5704a)]',
};

const Swatch = ({ c }) => {
    if (c === 'none') return <div className="w-[14px] h-[14px] border border-black"><NoStroke /></div>;
    if (c === 'reg') {
        return (
            <div className="w-[14px] h-[14px] bg-white">
                <Shape w={14} h={14} box="0 0 14 14">
                    <circle cx="7" cy="7" r="4" fill="none" stroke="#000" />
                    <path d="M0 7 H14 M7 0 V14" stroke="#000" />
                </Shape>
            </div>
        );
    }
    if (swatchClass[c]) return <div className={`w-[14px] h-[14px] ${swatchClass[c]}`} />;
    return <div className="w-[14px] h-[14px]" style={{ background: c }} />;
};

const Bulb = ({ children }) => (
    <Shape w={14} h={13} box="0 0 14 13">{children}</Shape>
);

const layers = [
    { thumb: 'dot', name: '<Yol>' },
    { thumb: 'half', name: '<Yol>' },
    { thumb: 'e', color: 'text-[#cf2e38]', name: '<Bileş...' },
    { thumb: 't', color: 'text-[#cf2e38]', name: '<Yol>' },
    { thumb: 's', color: 'text-[#cf2e38]', name: '<Yol>' },
    { thumb: 'e', color: 'text-[#cf2e38]', name: '<Bileş...' },
    { thumb: 'n', color: 'text-black', name: '<Yol>' },
    { thumb: 'k', color: 'text-[#cf2e38]', name: '<Yol>' },
    { thumb: 'k', color: 'text-black', name: '<Yol>' },
    { thumb: 'e', color: 'text-black', name: '<Bileş...' },
    { thumb: 't', color: 'text-black', name: '<Yol>' },
];

const Eye = () => (
    <Shape w={14} h={10} box="0 0 14 10">
        <path d="M0.5 5 C4 0 10 0 13.5 5 C10 10 4 10 0.5 5 Z" fill="none" stroke="#ccc" />
        <circle cx="7" cy="5" r="2.4" fill="#ccc" />
    </Shape>
);

const Thumb = ({ l }) => {
    if (l.thumb === 'dot') return <div className="w-[15px] h-[15px] rounded-full bg-[#cf2e38]" />;
    if (l.thumb === 'half') {
        return (
            <Shape w={15} h={17} box="0 0 15 17">
                <path d="M8 1 C13 4 14 9 11 13 C9 15 6 16 3 16 Z" fill="#cf2e38" />
            </Shape>
        );
    }
    return (
        <span className={`font-['Liberation_Sans',sans-serif] font-bold italic text-[19px] leading-none [-webkit-text-stroke:0.8px] ${l.color}`}>
            {l.thumb}
        </span>
    );
};

const LayerRow = ({ l }) => (
    <div className="h-[21px] shrink-0 flex items-stretch bg-[#585858] border-b border-[#444] text-[10px] text-[#e0e0e0]">
        <div className="w-[21px] -ml-px flex items-center justify-center border-r border-[#444]"><Eye /></div>
        <div className="w-[21px] border-r border-[#444]" />
        <div className="w-[6px] bg-[#4c76c8]" />
        <div className="w-[43px]" />
        <div className="w-[18px] h-[19px] mt-[1px] bg-white border border-black flex items-center justify-center overflow-hidden">
            <Thumb l={l} />
        </div>
        <div className="w-[73px] pl-[5px] flex items-center font-semibold whitespace-nowrap">{l.name}</div>
        <div className="flex-1 flex items-center justify-start pl-[5px] border-l border-[#444]">
            <div className="w-[9px] h-[9px] rounded-full border border-[#ccc]" />
        </div>
    </div>
);

const Col2 = () => (
    <div className="w-[242px] shrink-0 flex flex-col bg-[#4b4b4b] border-l border-[#2a2a2a] text-[#ddd]">
        <CollapseStrip />
        <PanelTabs tabs={['Renk', 'Renk Kılavuzu']} updown />
        <div className="h-[93px] shrink-0 pl-[6px] pt-[8px] border-b-2 border-[#2e2e2e] relative">
            <div className="flex w-[39px] h-[14px] border border-[#222]">
                <div className="w-[13px] h-full"><NoStroke /></div>
                <div className="w-[13px] h-full bg-black" />
                <div className="w-[13px] h-full bg-white" />
            </div>
            <div className="mt-[11px] w-[216px] h-[51px] border border-[#222] bg-[linear-gradient(to_bottom,#fff_0%,transparent_45%,transparent_55%,#000_100%),linear-gradient(to_right,#e8102c_0%,#f7b511_17%,#8ab51f_30%,#2a9c40_43%,#22aee0_56%,#1f3f92_68%,#6b2c8f_80%,#e2107a_92%,#e8102c_100%)]" />
        </div>
        <PanelTabs tabs={['Renk Örnekleri']} />
        <div className="h-[115px] shrink-0 flex flex-col pl-[6px] border-b-2 border-[#2e2e2e]">
            <div className="h-[35px] shrink-0 relative">
                <div className="absolute left-[0px] top-[6px] w-[19px] h-[19px] bg-[#e30f1f] border border-white" />
                <div className="absolute left-[10px] top-[16px] w-[19px] h-[19px] border border-[#222]"><NoStroke big /></div>
                <div className="absolute left-[178px] top-[7px] w-[51px] h-[21px] flex border border-[#333]">
                    <div className="w-[25px] bg-[#5e5e5e] flex flex-col items-center justify-center gap-[2px]">
                        <div className="w-[12px] h-px bg-[#ddd]" />
                        <div className="w-[12px] h-px bg-[#ddd]" />
                        <div className="w-[12px] h-px bg-[#ddd]" />
                        <div className="w-[12px] h-px bg-[#ddd]" />
                    </div>
                    <div className="flex-1 bg-[#3d3d3d] flex items-center justify-center">
                        <div className="grid grid-cols-3 gap-[1px]">
                            {Array.from({ length: 9 }).map((_, i) => (
                                <div key={i} className="w-[3px] h-[3px] bg-[#ddd]" />
                            ))}
                        </div>
                    </div>
                </div>
            </div>
            <div className="mt-[6px] h-[51px] shrink-0 flex w-[230px]">
                <div className="w-[214px] h-full overflow-hidden bg-[#3d3d3d] pt-[1px] pl-[1px]">
                    {swatches.map((row, i) => (
                        <div key={i} className="flex">
                            {row.map((c, j) => <Swatch key={j} c={c} />)}
                        </div>
                    ))}
                </div>
                <div className="w-[12px] ml-[3px] flex flex-col items-center bg-[#3d3d3d]">
                    <Arrow dir="up" size={8} className="fill-[#ddd] mt-[3px]" />
                    <div className="w-full h-[11px] bg-[#9a9a9a] mt-[3px]" />
                    <Arrow size={8} className="fill-[#ddd] mt-auto mb-[2px]" />
                </div>
            </div>
            <div className="flex items-center gap-[14px] pl-[2px] mt-[4px]">
                <Bulb><path d="M1 1 V12 H3 V1 Z M5 1 V12 H7 V1 Z M9 6 H12" stroke="#ccc" fill="#999" /></Bulb>
                <Bulb><circle cx="5" cy="8" r="3.5" fill="none" stroke="#ccc" /><path d="M7 5 L12 1" stroke="#ccc" strokeWidth="2" /></Bulb>
                <Bulb><path d="M1 3 H6 L7 5 H13 V12 H1 Z" fill="none" stroke="#ccc" /></Bulb>
                <Bulb><rect x="1" y="1" width="9" height="8" fill="#bbb" /></Bulb>
                <Bulb><rect x="2" y="2" width="10" height="9" fill="#666" stroke="#777" /></Bulb>
                <Bulb><path d="M1 3 H6 L7 5 H13 V12 H1 Z" fill="#bbb" /></Bulb>
                <Bulb><path d="M3 2 H12 V12 H7 V7 H3 Z" fill="#777" /></Bulb>
                <Bulb><path d="M3 3 H11 L10 12 H4 Z M5 1 H9 V2 H5 Z" fill="#666" /></Bulb>
            </div>
        </div>
        <PanelTabs tabs={['Degrade', 'Saydamlık']} active={1} updown />
        <div className="h-[106px] shrink-0 flex flex-col pl-[6px] pr-[4px] border-b-2 border-[#2e2e2e]">
            <div className="h-[32px] shrink-0 flex items-center border-b border-[#3d3d3d]">
                <div className="w-[104px] h-[17px] flex">
                    <div className="flex-1 bg-[#5a5a5a] border border-[#333] flex items-center pl-[6px] text-[10px] font-semibold text-[#ddd]">Normal</div>
                    <Drop w="w-[17px]" />
                </div>
                <span className="ml-[6px] text-[9.5px] font-semibold text-[#ccc]">Opaklık:</span>
                <div className="ml-[5px] h-[17px] flex">
                    <div className="w-[51px] bg-[#a0a0a0] flex items-center pl-[2px] text-[10px] text-[#222]">100%</div>
                    <div className="w-[14px] flex items-center justify-center bg-[#555] border border-[#333]"><Arrow dir="right" /></div>
                </div>
            </div>
            <div className="flex pt-[8px]">
                <div className="w-[132px] h-[55px] bg-[#464646] border border-[#333]" />
                <div className="ml-[5px] flex flex-col">
                    <div className="w-[88px] h-[18px] flex items-center justify-center bg-[#585858] border border-[#3a3a3a] text-[9.5px] font-semibold text-[#787878]">Maske Yap</div>
                    <Check cls="mt-[7px]">Kes</Check>
                    <Check cls="mt-[9px]">Mske Ters Çvr</Check>
                </div>
            </div>
        </div>
        <PanelTabs tabs={['Katmanlar', 'Çalışma Yüzeyleri']} />
        <div className="flex-1 min-h-0 flex flex-col pl-[6px]">
            <div className="h-[244px] mt-[6px] flex w-[229px] shrink-0">
                <div className="w-[216px] h-full flex flex-col">
                    <div className="h-[8px] shrink-0 flex bg-[#585858] border-b border-[#444]">
                        <div className="ml-[90px] w-[18px] h-full bg-white border-x border-b border-black flex justify-center">
                            <div className="w-[12px] h-[5px] rounded-b-full bg-[#cf2e38]" />
                        </div>
                    </div>
                    {layers.map((l, i) => <LayerRow key={i} l={l} />)}
                </div>
                <div className="w-[12px] ml-px flex flex-col items-center bg-[#3a3a3a]">
                    <Arrow dir="up" size={8} className="fill-[#ddd] mt-[4px]" />
                    <div className="w-full flex-1 mt-[79px] bg-[#8f8f8f]" />
                    <Arrow size={8} className="fill-[#ddd] my-[2px]" />
                </div>
            </div>
            <div className="flex-1 flex items-center">
                <span className="text-[9.5px] font-semibold text-[#ddd] w-[88px]">1 Katman</span>
                <div className="flex gap-[14px] items-center">
                    <Bulb><circle cx="8" cy="5" r="4" fill="none" stroke="#666" /><path d="M5 8 L1 12" stroke="#666" /></Bulb>
                    <Bulb><rect x="2" y="2" width="7" height="7" fill="#666" /><rect x="6" y="5" width="7" height="7" fill="#555" /></Bulb>
                    <Bulb><path d="M1 3 H4 M4 2 L6 4 M7 2 H13 V12 H9 V7 H7 Z" fill="#666" stroke="#666" /></Bulb>
                    <Bulb><path d="M2 3 H12 V13 H7 V8 H2 Z" fill="#ddd" /></Bulb>
                    <Bulb><path d="M3 3 H11 L10 13 H4 Z M5 1 H9 V2 H5 Z" fill="#666" /></Bulb>
                </div>
            </div>
        </div>
    </div>
);

export default function App() {
    return (
        <div className={`w-[1366px] h-[727px] flex flex-col overflow-hidden bg-[#4b4b4b] ${FONT}`}>
            <MenuBar />
            <ControlBar />
            <div className="flex-1 min-h-0 flex">
                <Toolbar />
                <CanvasArea />
                <Col1 />
                <Col2 />
            </div>
        </div>
    );
}
